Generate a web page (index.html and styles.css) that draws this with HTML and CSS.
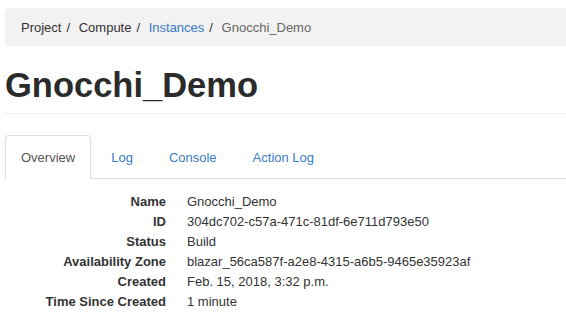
FILE: index.html
```html
<!DOCTYPE html>
<html>
<head>
  <meta charset="utf-8">
  <title>Gnocchi_Demo</title>
  <link rel="stylesheet" href="styles.css">
</head>
<body>
  <div class="page">
    <ol class="breadcrumb">
      <li>Project</li>
      <li>Compute</li>
      <li><a href="#">Instances</a></li>
      <li class="active">Gnocchi_Demo</li>
    </ol>

    <div class="page-header">
      <h1>Gnocchi_Demo</h1>
    </div>

    <ul class="nav-tabs">
      <li class="active"><a href="#">Overview</a></li>
      <li><a href="#">Log</a></li>
      <li><a href="#">Console</a></li>
      <li><a href="#">Action Log</a></li>
    </ul>

    <dl class="details">
      <dt>Name</dt>
      <dd>Gnocchi_Demo</dd>
      <dt>ID</dt>
      <dd>304dc702-c57a-471c-81df-6e711d793e50</dd>
      <dt>Status</dt>
      <dd>Build</dd>
      <dt>Availability Zone</dt>
      <dd>blazar_56ca587f-a2e8-4315-a6b5-9465e35923af</dd>
      <dt>Created</dt>
      <dd>Feb. 15, 2018, 3:32 p.m.</dd>
      <dt>Time Since Created</dt>
      <dd>1 minute</dd>
    </dl>
  </div>
</body>
</html>
```

FILE: styles.css
```css
body {
  margin: 0;
  font-family: "Liberation Sans", Arial, sans-serif;
  font-size: 13px;
  line-height: 20px;
  color: #333;
  background: #fff;
}

a {
  color: #3a7bc6;
  text-decoration: none;
}

.page {
  padding: 8px 0 0 5px;
}

.breadcrumb {
  display: flex;
  list-style: none;
  margin: 0;
  padding: 10px 16px 8px;
  background-color: #f2f2f2;
  border-radius: 4px 0 0 4px;
}

.breadcrumb li + li:before {
  content: "/\00a0";
  padding: 0 5px;
  color: #333;
}

.breadcrumb .active {
  color: #666;
}

.page-header {
  margin-top: 20px;
  padding-bottom: 9px;
  border-bottom: 1px solid #eee;
}

.page-header h1 {
  margin: 0;
  font-size: 34.5px;
  line-height: 38px;
  font-weight: bold;
  color: #2b2b2b;
}

.nav-tabs {
  display: flex;
  list-style: none;
  margin: 21px 0 0 0;
  padding: 0;
  border-bottom: 1px solid #ddd;
}

.nav-tabs li {
  margin-bottom: -1px;
  margin-right: 4px;
}

.nav-tabs a {
  display: block;
  padding: 12px 15px 10px;
  border: 1px solid transparent;
  border-radius: 4px 4px 0 0;
}

.nav-tabs .active a {
  color: #555;
  background: #fff;
  border-color: #ddd #ddd transparent;
}

.details {
  display: grid;
  grid-template-columns: 161px 1fr;
  column-gap: 21px;
  margin: 13px 0 0 0;
}

.details dt {
  font-weight: bold;
  text-align: right;
  white-space: nowrap;
}

.details dd {
  margin: 0;
  white-space: nowrap;
}
```
